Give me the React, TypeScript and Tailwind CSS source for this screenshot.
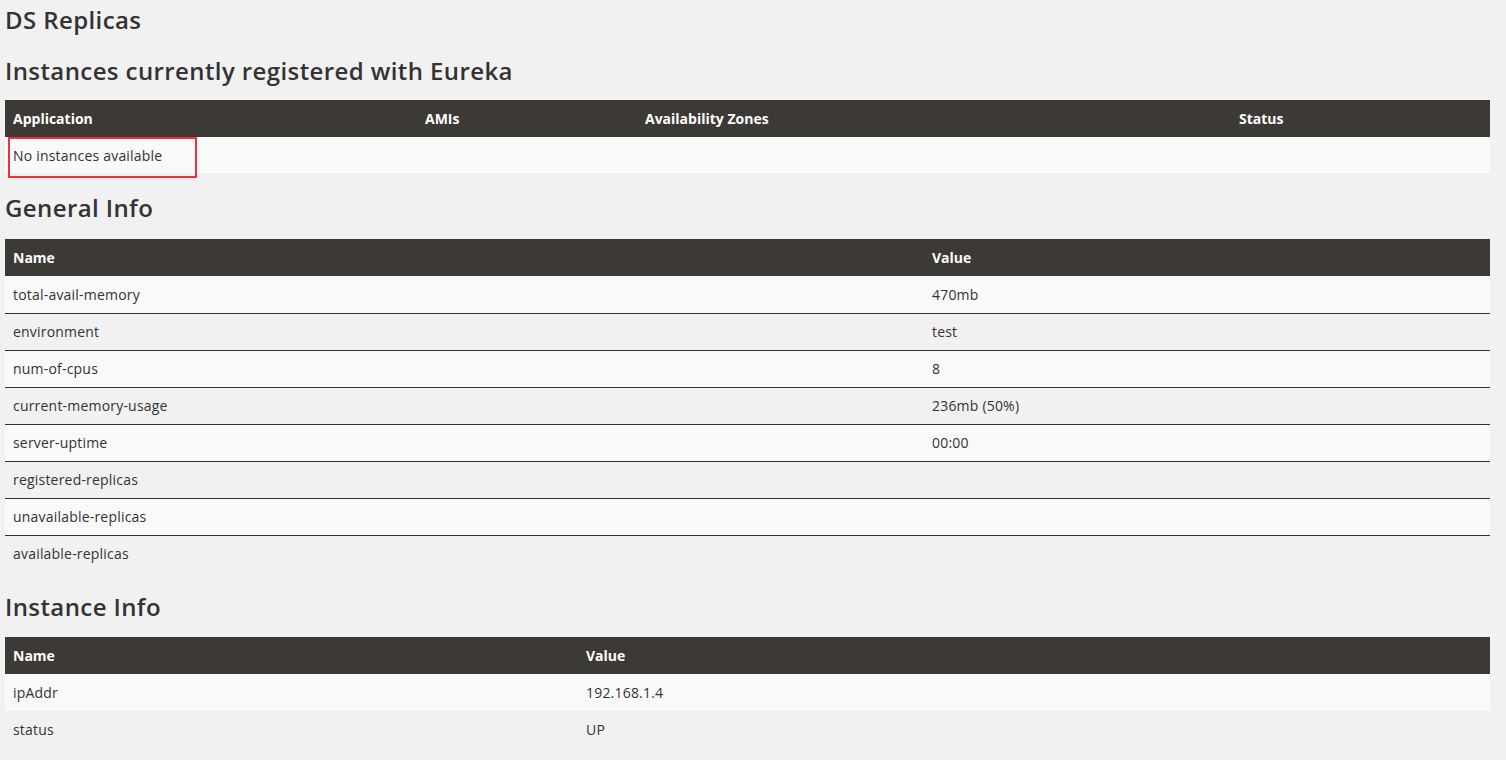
const instanceCols = [
  { label: "Application", w: "w-[412px]" },
  { label: "AMIs", w: "w-[220px]" },
  { label: "Availability Zones", w: "w-[594px]" },
  { label: "Status", w: "" },
];

const generalInfo: [string, string][] = [
  ["total-avail-memory", "470mb"],
  ["environment", "test"],
  ["num-of-cpus", "8"],
  ["current-memory-usage", "236mb (50%)"],
  ["server-uptime", "00:00"],
  ["registered-replicas", ""],
  ["unavailable-replicas", ""],
  ["available-replicas", ""],
];

const instanceInfo: [string, string][] = [
  ["ipAddr", "192.168.1.4"],
  ["status", "UP"],
];

function Heading({ children, className = "" }: { children: React.ReactNode; className?: string }) {
  return (
    <h2
      className={`font-['Open_Sans',sans-serif] text-[24px] leading-[30px] font-semibold tracking-[0.4px] text-[#333] ${className}`}
    >
      {children}
    </h2>
  );
}

function KeyValueTable({ rows, nameW }: { rows: [string, string][]; nameW: string }) {
  return (
    <table className="w-[1485px] border-collapse text-[14px] tracking-[0.2px] text-[#333]">
      <thead>
        <tr className="h-[37px] bg-[#3d3935] text-left text-white">
          <th className={`${nameW} px-2 font-bold tracking-normal`}>Name</th>
          <th className="px-2 font-bold tracking-normal">Value</th>
        </tr>
      </thead>
      <tbody>
        {rows.map(([k, v], i) => (
          <tr key={k} className={`h-[37px] ${i % 2 === 0 ? "bg-[#f9f9f9]" : "bg-[#f1f1f1]"}`}>
            <td className="px-2">{k}</td>
            <td className="px-2">{v}</td>
          </tr>
        ))}
      </tbody>
    </table>
  );
}

export default function App() {
  return (
    <div className="min-h-screen bg-[#f1f1f1] pl-[5px] font-['Open_Sans',sans-serif]">
      <Heading className="pt-[5px]">DS Replicas</Heading>
      <Heading className="mt-[21px]">Instances currently registered with Eureka</Heading>

      <div className="relative mt-[14px]">
        <table className="w-[1485px] border-collapse text-[14px] text-[#333]">
          <thead>
            <tr className="h-[37px] bg-[#3d3935] text-left text-white">
              {instanceCols.map((c) => (
                <th key={c.label} className={`${c.w} px-2 font-bold`}>
                  {c.label}
                </th>
              ))}
            </tr>
          </thead>
          <tbody>
            <tr className="h-[36px] bg-[#f9f9f9]">
              <td className="px-2 tracking-[0.2px]" colSpan={4}>
                No instances available
              </td>
            </tr>
          </tbody>
        </table>
        <div className="pointer-events-none absolute top-[37px] left-[3px] h-[41px] w-[189px] border-2 border-[#e8343a]" />
      </div>

      <Heading className="mt-[20px]">General Info</Heading>
      <div className="mt-[16px] [&_tbody_tr+tr]:border-t [&_tbody_tr+tr]:border-[#333]">
        <KeyValueTable rows={generalInfo} nameW="w-[919px]" />
      </div>

      <Heading className="mt-[20px]">Instance Info</Heading>
      <div className="mt-[15px] pb-3">
        <KeyValueTable rows={instanceInfo} nameW="w-[573px]" />
      </div>
    </div>
  );
}
